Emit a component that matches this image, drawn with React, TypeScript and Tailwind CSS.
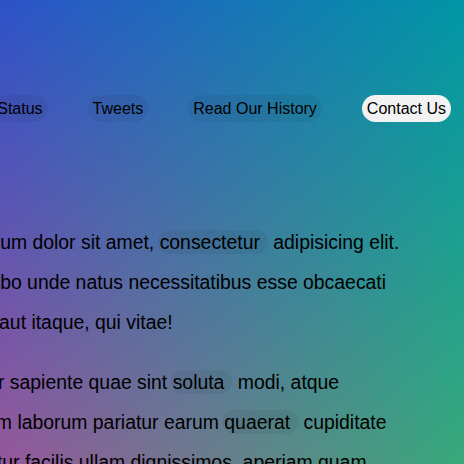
const NAV_LINKS = ['Home', 'About', 'Status', 'Tweets', 'Read Our History'];

function Mark({ children }: { children: React.ReactNode }) {
  return <span className="-ml-[2px] rounded-full bg-black/5 py-[1px] pr-[8px] pl-[2px]">{children}</span>;
}

export default function App() {
  return (
    <div className="grid h-[464px] grid-cols-1 overflow-hidden bg-[linear-gradient(to_right,#9b5899,#3aaa7a)] font-['Liberation_Sans',Arial,sans-serif] text-black">
      <div className="[grid-area:1/1] bg-[linear-gradient(to_right,#2d52c8,#0096a6)] [mask-image:linear-gradient(to_bottom,#000,transparent)]"></div>
      <div className="relative [grid-area:1/1] flex min-w-0 flex-col">
        <nav className="flex justify-end gap-10 pt-[95px] pr-[13px]">
          {NAV_LINKS.map((link) => (
            <a key={link} className="shrink-0 whitespace-nowrap rounded-full bg-black/5 px-[5px] py-1 text-base leading-[19px]">
              {link}
            </a>
          ))}
          <a className="shrink-0 whitespace-nowrap rounded-full bg-[#f2f2f2] px-[5px] py-1 text-base leading-[19px]">
            Contact Us
          </a>
        </nav>

        <main className="mt-[100px] ml-[-85px] flex flex-col gap-5 whitespace-nowrap text-[19.4px] leading-[40px]">
          <p>
            Lorem ipsum dolor sit amet, <Mark>consectetur</Mark> adipisicing elit.
            <br />
            Ut explicabo unde natus necessitatibus esse obcaecati
            <br />
            Deserunt aut itaque, qui vitae!
          </p>
          <p>
            Ab tenetur sapiente quae sint <Mark>soluta</Mark> modi, atque
            <br />
            Velit earum laborum pariatur earum <Mark>quaerat</Mark> cupiditate
            <br />
            Consectetur facilis ullam dignissimos, aperiam quam
          </p>
        </main>
      </div>
    </div>
  );
}
